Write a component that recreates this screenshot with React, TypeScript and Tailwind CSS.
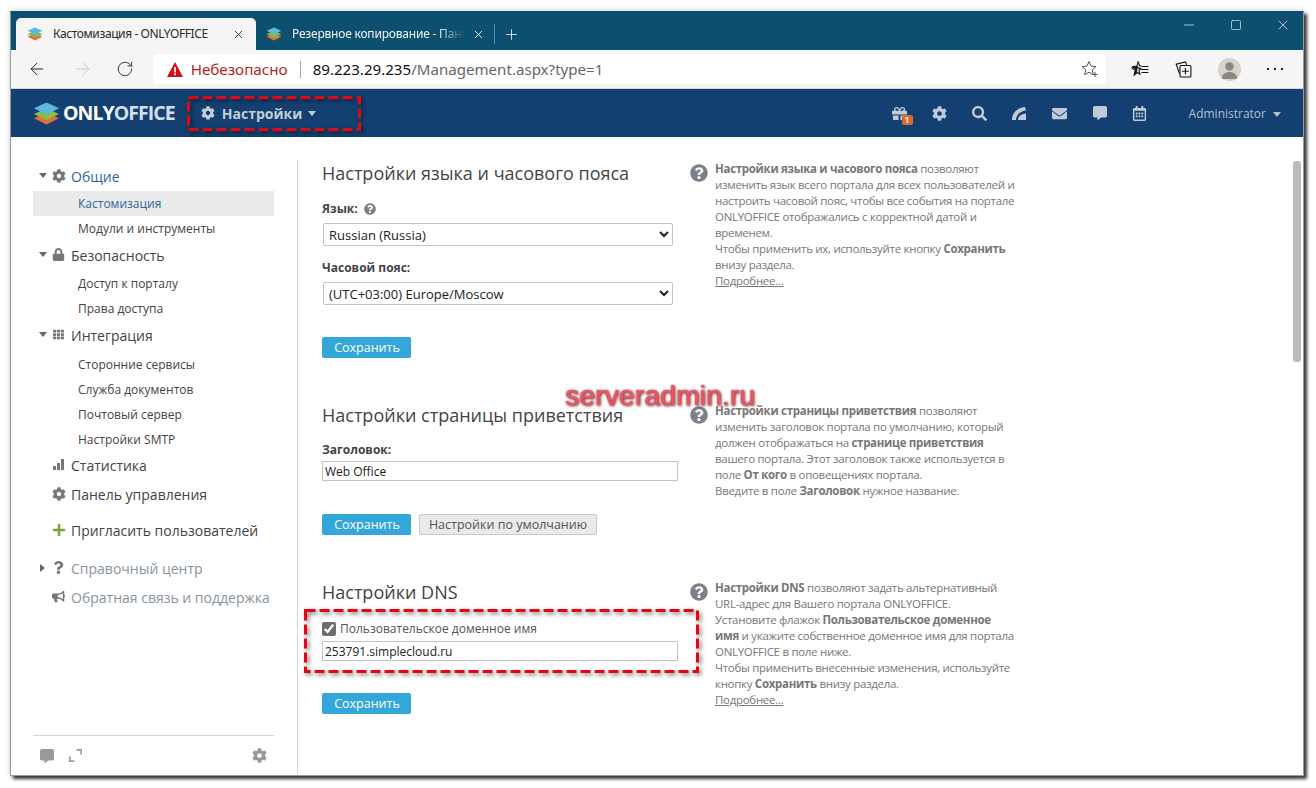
import {
  FaBullhorn,
  FaCog,
  FaCommentAlt,
  FaEnvelope,
  FaGift,
  FaLock,
  FaPlus,
  FaQuestion,
  FaQuestionCircle,
  FaRegCalendarAlt,
  FaSearch,
  FaTh,
} from "react-icons/fa";
import { ArrowLeft, ArrowRight, Minus, Plus, RotateCw, Square, X } from "lucide-react";

const sans = "font-['Open_Sans',sans-serif]";

function Layers({ size = 16 }: { size?: number }) {
  return (
    <svg width={size} height={size} viewBox="0 0 28 24" className="shrink-0">
      <path d="M14 11l13 6-13 6.500L1 17z" fill="#e0703c" />
      <path d="M14 6.500l13 6-13 6.500L1 12.500z" fill="#8bb84c" />
      <path d="M14 .5l13 6-13 6.500L1 6.500z" fill="#5cb8e0" />
    </svg>
  );
}

function Caret({ className = "" }: { className?: string }) {
  return <span className={`inline-block w-0 h-0 border-x-[4px] border-x-transparent border-t-[5px] ${className}`} />;
}

// red dashed frame the author of the screenshot drew over the page
function DashedFrame({ className }: { className: string }) {
  return (
    <div className={`absolute pointer-events-none ${className}`}>
      <svg width="100%" height="100%" className="overflow-visible drop-shadow-[2px_2px_2px_rgba(0,0,0,0.55)]">
        <rect x="1.5" y="1.5" width="calc(100% - 3px)" height="calc(100% - 3px)" fill="none" stroke="#e30613" strokeWidth="3" strokeDasharray="10 4" />
      </svg>
    </div>
  );
}

function Tab() {
  return (
    <div className="flex items-center w-[240px] h-[32px] bg-[#f5f5f5] rounded-t-[5px] pl-[11px] pr-[11px]">
      <Layers />
      <span className="ml-[10px] text-[12px] tracking-[-0.4px] text-[#2a2a2a] whitespace-nowrap flex-1">Кастомизация - ONLYOFFICE</span>
      <X size={13} strokeWidth={1.6} className="text-[#222]" />
    </div>
  );
}

function TitleBar() {
  return (
    <div className="h-[38px] bg-[#0d4f6f] flex items-end pl-[5px] relative shrink-0">
      <Tab />
      <div className="flex items-center h-[32px] pl-[10px]">
        <Layers />
        <span className="ml-[10px] w-[172px] overflow-hidden whitespace-nowrap text-[12px] tracking-[-0.2px] text-[#f2f6f8] [mask-image:linear-gradient(to_right,#000_85%,transparent)]">
          Резервное копирование - Панель
        </span>
        <X size={13} strokeWidth={1.6} className="ml-[8px] text-white" />
        <span className="ml-[9px] w-px h-[20px] bg-[#5f8ba0]" />
        <Plus size={17} strokeWidth={1.1} className="ml-[8px] text-white" />
      </div>
      <div className="ml-auto self-start flex items-center h-[25px] text-white pr-[12px] gap-[31px]">
        <Minus size={16} strokeWidth={1} />
        <Square size={12} strokeWidth={1.2} className="mx-[2px]" />
        <X size={16} strokeWidth={1} />
      </div>
    </div>
  );
}

function Toolbar() {
  return (
    <div className="h-[39px] bg-[#f5f5f5] border-b border-[#d4d4d4] flex items-center shrink-0 pl-[16px] pr-[20px]">
      <ArrowLeft size={20} strokeWidth={1.2} className="text-[#222]" />
      <ArrowRight size={20} strokeWidth={1.2} className="ml-[26px] text-[#c9c9c9]" />
      <RotateCw size={18} strokeWidth={1.2} className="ml-[23px] text-[#222]" />
      <div className="ml-[19px] w-[960px] h-[30px] bg-white rounded-[4px] flex items-center pl-[14px] pr-[7px]">
        <svg width="16" height="15" viewBox="0 0 16 15">
          <path d="M8 0l8 15H0z" fill="#c5141c" />
          <rect x="7.200" y="5" width="1.700" height="5.500" fill="#fff" />
          <rect x="7.200" y="11.500" width="1.700" height="1.800" fill="#fff" />
        </svg>
        <span className="ml-[8px] text-[15.2px] text-[#b3261e]">Небезопасно</span>
        <span className="ml-[12px] w-px h-[17px] bg-[#a8a8a8]" />
        <span className="ml-[12px] text-[15.1px] text-[#111]">
          89.223.29.235<span className="text-[#666]">/Management.aspx?type=1</span>
        </span>
        <svg width="18" height="18" viewBox="0 0 18 18" fill="none" stroke="#555" className="ml-auto">
          <path d="M8 1.500l2 4.600 5 .4-3.800 3.300 1.100 4.900L8 12.200l-4.300 2.500 1.100-4.900L1 6.500l5-.4z" strokeWidth="1" />
          <path d="M14 12v5M11.500 14.500h5" strokeWidth="1" />
        </svg>
      </div>
      <svg width="18" height="18" viewBox="0 0 18 18" className="ml-[25px]" fill="none" stroke="#111" strokeWidth="1.100">
        <path d="M7 1.500l1.700 4.400 1.800.1M10 8.700L8 10.300l1 4-2.600-1.800-3.200 2.600 1.200-4.400L1 7.900l4.600-.5z" />
        <path d="M7 1.500L5.600 5.900 1 6.300l3.400 2.900-1.200 5.900 2.600-3.100z" fill="#111" strokeWidth=".4" />
        <path d="M10.500 6.500h7M10.500 9.500h7M10.500 12.500h7" strokeWidth="1.200" />
      </svg>
      <svg width="17" height="17" viewBox="0 0 17 17" className="ml-[26px]" fill="none" stroke="#111" strokeWidth="1.100">
        <path d="M4.500 12.500L1.200 3.200 10.500.8l1.200 3" />
        <rect x="5" y="4.500" width="11" height="11.500" rx="1" fill="#f5f5f5" />
        <path d="M10.500 7v6.500M7.200 10.200h6.600" />
      </svg>
      <div className="ml-[26px] w-[23px] h-[23px] rounded-full bg-[#d8d2cd] overflow-hidden">
        <svg width="23" height="23" viewBox="0 0 23 23">
          <circle cx="11.500" cy="8.500" r="4.200" fill="#8b8782" />
          <path d="M3.500 21c.5-5 4-7 8-7s7.500 2 8 7z" fill="#8b8782" />
        </svg>
      </div>
      <div className="ml-[26px] flex gap-[3px]">
        <span className="w-[2px] h-[2px] bg-[#222]" />
        <span className="w-[2px] h-[2px] ml-[2px] bg-[#222]" />
        <span className="w-[2px] h-[2px] ml-[2px] bg-[#222]" />
      </div>
    </div>
  );
}

function HeaderIcon({ children }: { children: React.ReactNode }) {
  return <div className="w-[40px] flex justify-center text-[#c0cad8] relative">{children}</div>;
}

function AppHeader() {
  return (
    <div className={`h-[48px] bg-[#134070] flex items-center shrink-0 pl-[22px] pr-[22px] ${sans}`}>
      <Layers size={27} />
      <span className="ml-[3px] text-[19.5px] font-bold tracking-[-0.95px] text-white">
        ONLY<span className="text-[#d5dee8]">OFFICE</span>
      </span>
      <div className="ml-[26px] flex items-center text-[#c5cdd8]">
        <FaCog size={14} />
        <span className="ml-[7px] text-[14px] font-bold">Настройки</span>
        <Caret className="ml-[6px] border-t-[#c5cdd8]" />
      </div>
      <div className="ml-auto flex items-center">
        <HeaderIcon>
          <FaGift size={15} />
          <span className="absolute left-[22px] top-[9px] w-[11px] h-[10px] rounded-[2px] bg-[#e0672c] text-white text-[8px] font-bold leading-[10px] text-center">1</span>
        </HeaderIcon>
        <HeaderIcon>
          <FaCog size={15} />
        </HeaderIcon>
        <HeaderIcon>
          <FaSearch size={15} />
        </HeaderIcon>
        <HeaderIcon>
          <svg width="15" height="13" viewBox="0 0 15 13" fill="currentColor">
            <path d="M0 13C0 6 5 1 13 0l1 3.500C8.500 4 4 8 4 13z" />
            <path d="M6 13c0-3.500 3-6 8-6.500V13z" />
          </svg>
        </HeaderIcon>
        <HeaderIcon>
          <FaEnvelope size={15} />
        </HeaderIcon>
        <HeaderIcon>
          <FaCommentAlt size={14} />
        </HeaderIcon>
        <HeaderIcon>
          <FaRegCalendarAlt size={15} />
        </HeaderIcon>
        <span className="ml-[29px] mt-[2px] text-[12px] text-[#b4bfce]">Administrator</span>
        <Caret className="ml-[7px] mt-[2px] border-t-[#b4bfce]" />
      </div>
    </div>
  );
}

function NavHead({
  icon,
  label,
  caret,
  className = "text-[#444]",
}: {
  icon?: React.ReactNode;
  label: string;
  caret?: "down" | "right";
  className?: string;
}) {
  return (
    <div className={`relative flex items-center pl-[38px] text-[14px] h-[24px] whitespace-nowrap ${className}`}>
      {caret === "down" && <Caret className="absolute left-[6px] top-[9px] border-t-[#666]" />}
      {caret === "right" && (
        <span className="absolute left-[7px] top-[8px] w-0 h-0 border-y-[4px] border-y-transparent border-l-[5px] border-l-[#666]" />
      )}
      <span className="absolute left-[18px] top-[5px] w-[15px] flex justify-center text-[#777]">{icon}</span>
      {label}
    </div>
  );
}

function NavItem({ label, active }: { label: string; active?: boolean }) {
  return (
    <div className={`h-[25px] leading-[25px] pl-[45px] text-[12px] whitespace-nowrap ${active ? "bg-[#eaeaea] text-[#2e6699]" : "text-[#444]"}`}>
      {label}
    </div>
  );
}

function Sidebar() {
  return (
    <aside className="w-[287px] shrink-0 pl-[22px] pr-[24px] pt-[27px] flex flex-col relative">
      <NavHead caret="down" icon={<FaCog size={14} />} label="Общие" className="text-[#2e6699]" />
      <div className="mt-[3px]">
        <NavItem label="Кастомизация" active />
        <NavItem label="Модули и инструменты" />
      </div>
      <NavHead caret="down" icon={<FaLock size={13} />} label="Безопасность" className="mt-[2px] text-[#444]" />
      <div className="mt-[4px]">
        <NavItem label="Доступ к порталу" />
        <NavItem label="Права доступа" />
      </div>
      <NavHead caret="down" icon={<FaTh size={11} className="mt-[1px]" />} label="Интеграция" className="mt-[2px] text-[#444]" />
      <div className="mt-[5px]">
        <NavItem label="Сторонние сервисы" />
        <NavItem label="Служба документов" />
        <NavItem label="Почтовый сервер" />
        <NavItem label="Настройки SMTP" />
      </div>
      <NavHead
        icon={
          <svg width="11" height="11" viewBox="0 0 11 11" fill="currentColor" className="mt-[1px]">
            <rect x="0" y="7" width="3" height="4" />
            <rect x="4" y="4" width="3" height="7" />
            <rect x="8" y="0" width="3" height="11" />
          </svg>
        }
        label="Статистика"
        className="mt-[1px] text-[#444]"
      />
      <NavHead icon={<FaCog size={14} />} label="Панель управления" className="mt-[5px] text-[#444]" />
      <NavHead icon={<FaPlus size={14} className="text-[#7aa63c]" />} label="Пригласить пользователей" className="mt-[12px] text-[#444]" />
      <NavHead caret="right" icon={<FaQuestion size={13} />} label="Справочный центр" className="mt-[14px] text-[#8a949f]" />
      <NavHead icon={<FaBullhorn size={13} />} label="Обратная связь и поддержка" className="mt-[5px] text-[#8a949f]" />
      <div className="mt-auto mb-[10px] border-t border-[#d4d4d4] h-[30px] pt-[10px] flex items-center text-[#9a9a9a] pl-[7px] pr-[7px]">
        <FaCommentAlt size={14} />
        <svg width="13" height="13" viewBox="0 0 12 12" fill="none" stroke="currentColor" strokeWidth="1.500" className="ml-[15px]">
          <path d="M7 .8h4.200V5M5 11.200H.8V7" />
        </svg>
        <FaCog size={15} className="ml-auto" />
      </div>
      <div className="absolute right-0 top-[23px] bottom-0 w-px bg-[#d4d4d4]" />
    </aside>
  );
}

function SaveButton() {
  return (
    <button className="w-[89px] h-[21px] pl-[1px] bg-[#33a7da] rounded-[2px] text-white text-[12.5px] leading-[21px] text-center">Сохранить</button>
  );
}

function Help({ children }: { children: React.ReactNode }) {
  return (
    <div className="flex">
      <FaQuestionCircle size={18} className="mt-[3px] text-[#7b8089] shrink-0" />
      <p className="ml-[7px] w-[320px] text-[11.5px] tracking-[-0.3px] leading-[16px] text-[#777]">{children}</p>
    </div>
  );
}

function SelectBox({ value }: { value: string }) {
  return (
    <select
      defaultValue={value}
      className="block w-[350px] h-[23px] ml-px border border-[#c4c4c4] rounded-[2px] bg-white text-[13px] text-[#222] pl-[1px]"
    >
      <option>{value}</option>
    </select>
  );
}

function Title({ children }: { children: React.ReactNode }) {
  return <h2 className="text-[18px] leading-[24px] text-[#444]">{children}</h2>;
}

function Label({ children, className = "" }: { children: React.ReactNode; className?: string }) {
  return <div className={`text-[12px] font-bold leading-[16px] text-[#444] ${className}`}>{children}</div>;
}

function Content() {
  return (
    <main className="flex-1 pl-[24px] pt-[24px] relative">
      <section className="flex h-[243px]">
        <div className="w-[368px]">
          <Title>Настройки языка и часового пояса</Title>
          <Label className="mt-[16px] flex items-center">
            Язык:
            <FaQuestionCircle size={12} className="ml-[6px] text-[#7b8089]" />
          </Label>
          <div className="mt-[6px]">
            <SelectBox value="Russian (Russia)" />
          </div>
          <Label className="mt-[14px]">Часовой пояс:</Label>
          <div className="mt-[6px]">
            <SelectBox value="(UTC+03:00) Europe/Moscow" />
          </div>
          <div className="mt-[29px]">
            <SaveButton />
          </div>
        </div>
        <Help>
          <b>Настройки языка и часового пояса</b> позволяют
          <br />
          изменить язык всего портала для всех пользователей и
          <br />
          настроить часовой пояс, чтобы все события на портале
          <br />
          ONLYOFFICE отображались с корректной датой и
          <br />
          временем.
          <br />
          Чтобы применить их, используйте кнопку <b>Сохранить</b>
          <br />
          внизу раздела.
          <br />
          <u>Подробнее...</u>
        </Help>
      </section>

      <section className="flex h-[177px] mt-[-1px]">
        <div className="w-[368px]">
          <Title>Настройки страницы приветствия</Title>
          <Label className="mt-[15px]">Заголовок:</Label>
          <input
            defaultValue="Web Office"
            className="block mt-[3px] w-[356px] h-[20px] border border-[#c4c4c4] bg-white text-[12px] text-[#222] pl-[2px]"
          />
          <div className="mt-[33px] flex gap-[8px]">
            <SaveButton />
            <button className="w-[178px] h-[21px] bg-[#eaeaea] border border-[#c9c9c9] rounded-[2px] text-[#555] text-[12.5px] leading-[19px] text-center">
              Настройки по умолчанию
            </button>
          </div>
        </div>
        <Help>
          <b>Настройки страницы приветствия</b> позволяют
          <br />
          изменить заголовок портала по умолчанию, который
          <br />
          должен отображаться на <b>странице приветствия</b>
          <br />
          вашего портала. Этот заголовок также используется в
          <br />
          поле <b>От кого</b> в оповещениях портала.
          <br />
          Введите в поле <b>Заголовок</b> нужное название.
        </Help>
      </section>

      <section className="flex">
        <div className="w-[368px]">
          <Title>Настройки DNS</Title>
          <label className="mt-[17px] flex items-center h-[16px] text-[12px] text-[#555]">
            <input type="checkbox" defaultChecked className="w-[14px] h-[14px] accent-[#6f6f6f]" />
            <span className="ml-[4px]">Пользовательское доменное имя</span>
          </label>
          <input
            defaultValue="253791.simplecloud.ru"
            className="block mt-[4px] w-[356px] h-[20px] border border-[#c4c4c4] bg-white text-[12px] text-[#222] pl-[2px]"
          />
          <div className="mt-[29px]">
            <SaveButton />
          </div>
        </div>
        <Help>
          <b>Настройки DNS</b> позволяют задать альтернативный
          <br />
          URL-адрес для Вашего портала ONLYOFFICE.
          <br />
          Установите флажок <b>Пользовательское доменное</b>
          <br />
          <b>имя</b> и укажите собственное доменное имя для портала
          <br />
          ONLYOFFICE в поле ниже.
          <br />
          Чтобы применить внесенные изменения, используйте
          <br />
          кнопку <b>Сохранить</b> внизу раздела.
          <br />
          <u>Подробнее...</u>
        </Help>
      </section>

      {/* page scrollbar */}
      <div className="absolute top-[24px] right-[2px] w-[8px] h-[201px] rounded-[3px] bg-[#bbbbbb]" />
    </main>
  );
}

export default function App() {
  return (
    <div className="w-[1316px] h-[788px] bg-white overflow-hidden pt-[11px] pl-[10px] relative">
      <div className="relative w-[1294px] h-[765px] flex flex-col bg-white border border-[#9a9a9a] border-t-[#0d4f6f] shadow-[3px_3px_3px_rgba(0,0,0,0.75),0_0_6px_rgba(0,0,0,0.2)] font-['Noto_Sans',sans-serif]">
        <TitleBar />
        <Toolbar />
        <AppHeader />
        <div className={`flex flex-1 min-h-0 ${sans}`}>
          <Sidebar />
          <Content />
        </div>
      </div>
      <DashedFrame className="left-[187px] top-[96px] w-[174px] h-[35px]" />
      <DashedFrame className="left-[304px] top-[609px] w-[395px] h-[64px]" />
      {/* watermark on the screenshot */}
      <div className="absolute left-[565px] top-[380px] font-['Liberation_Sans',sans-serif] text-[28.500px] leading-[30px] text-[#e8566c] [text-shadow:1px_1px_3px_rgba(90,0,0,0.9),0_0_2px_rgba(200,40,60,0.8)]">
        serveradmin.ru
      </div>
    </div>
  );
}
